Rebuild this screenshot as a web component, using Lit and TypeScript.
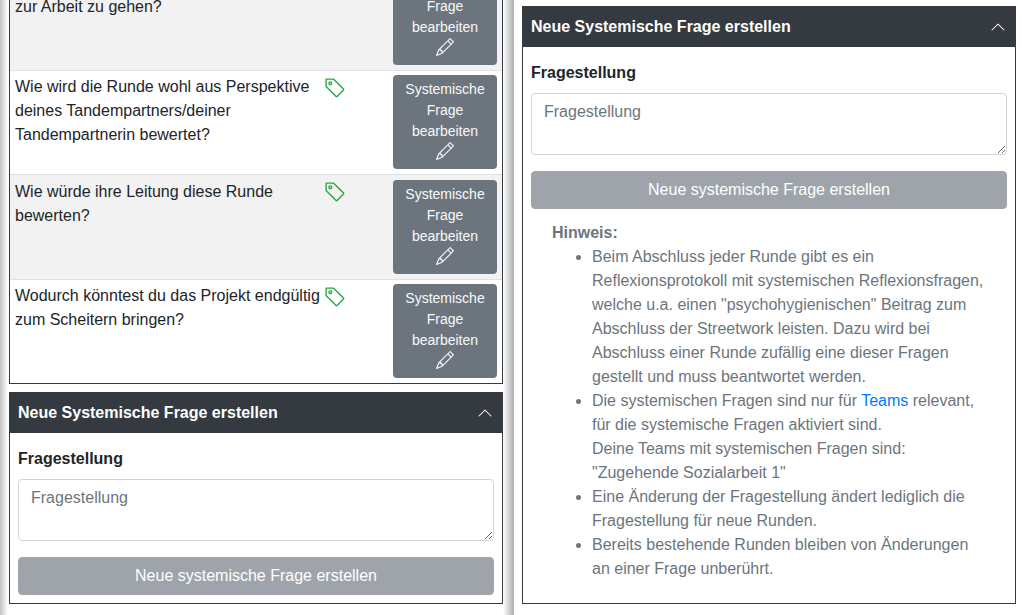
import { LitElement, html, css, svg } from 'lit';
import { customElement } from 'lit/decorators.js';

const chevronUp = svg`<path fill-rule="evenodd" d="M1.646 11.354a.5.5 0 0 1 0-.708l6-6a.5.5 0 0 1 .708 0l6 6a.5.5 0 0 1-.708.708L8 5.707l-5.646 5.647a.5.5 0 0 1-.708 0z"/>`;
const tag = svg`<path d="M6 4.5a1.5 1.5 0 1 1-3 0 1.5 1.5 0 0 1 3 0zm-1 0a.5.5 0 1 0-1 0 .5.5 0 0 0 1 0z"/><path d="M2 1h4.586a1 1 0 0 1 .707.293l7 7a1 1 0 0 1 0 1.414l-4.586 4.586a1 1 0 0 1-1.414 0l-7-7A1 1 0 0 1 1 6.586V2a1 1 0 0 1 1-1zm0 5.586l7 7L13.586 9l-7-7H2v4.586z"/>`;
const pencil = svg`<path d="M12.146.146a.5.5 0 0 1 .708 0l3 3a.5.5 0 0 1 0 .708l-10 10a.5.5 0 0 1-.168.11l-5 2a.5.5 0 0 1-.65-.65l2-5a.5.5 0 0 1 .11-.168l10-10zM11.207 2.5L13.5 4.793 14.793 3.5 12.5 1.207 11.207 2.5zm1.586 3L10.5 3.207 4 9.707V10h.5a.5.5 0 0 1 .5.5v.5h.5a.5.5 0 0 1 .5.5v.5h.293l6.5-6.5zm-9.761 5.175l-.106.106-1.528 3.821 3.821-1.528.106-.106A.5.5 0 0 1 5 12.5V12h-.5a.5.5 0 0 1-.5-.5V11h-.5a.5.5 0 0 1-.468-.325z"/>`;

@customElement('new-question-card')
export class NewQuestionCard extends LitElement {
  static styles = css`
    :host {
      display: block;
      border: 1px solid #343a40;
      border-top: 0;
      box-sizing: border-box;
      color: #212529;
    }
    .head {
      display: flex;
      justify-content: space-between;
      align-items: center;
      height: 41px;
      margin: 0 -1px;
      padding: 0 9px;
      background: #343a40;
      color: #fff;
      font-weight: 700;
    }
    .head svg {
      width: 16px;
      height: 16px;
      fill: #fff;
      margin-right: 1px;
    }
    .body {
      padding: 14px 8px 8px;
    }
    label {
      display: block;
      font-weight: 700;
      line-height: 24px;
      margin-bottom: 8px;
    }
    textarea {
      display: block;
      box-sizing: border-box;
      width: 100%;
      height: 62px;
      padding: 6px 12px;
      border: 1px solid #ced4da;
      border-radius: 4px;
      font: 16px/24px 'Liberation Sans', Arial, sans-serif;
      color: #495057;
      outline: none;
      margin-bottom: 16px;
    }
    textarea::placeholder {
      color: #6c757d;
      opacity: 1;
    }
    .submit {
      display: block;
      box-sizing: border-box;
      width: 100%;
      height: 38px;
      border: 1px solid #6c757d;
      border-radius: 4px;
      background: #6c757d;
      color: #fff;
      opacity: 0.65;
      font: 16px/24px 'Liberation Sans', Arial, sans-serif;
    }
  `;

  render() {
    return html`
      <div class="head">
        <span>Neue Systemische Frage erstellen</span>
        <svg viewBox="0 0 16 16">${chevronUp}</svg>
      </div>
      <div class="body">
        <label>Fragestellung</label>
        <textarea placeholder="Fragestellung"></textarea>
        <button class="submit" disabled>Neue systemische Frage erstellen</button>
        <slot></slot>
      </div>
    `;
  }
}

const questions = [
  html`<br />zur Arbeit zu gehen?`,
  html`Wie wird die Runde wohl aus Perspektive deines Tandempartners/deiner Tandempartnerin bewertet?`,
  html`Wie würde ihre Leitung diese Runde bewerten?`,
  html`Wodurch könntest du das Projekt endgültig zum Scheitern bringen?`,
];

@customElement('app-root')
export class AppRoot extends LitElement {
  static styles = css`
    :host {
      display: grid;
      grid-template-columns: 514px 1fr;
      height: 615px;
      overflow: hidden;
      background: #fff;
      font: 16px/24px 'Liberation Sans', Arial, sans-serif;
      color: #212529;
    }
    .left {
      box-sizing: border-box;
      height: 615px;
      overflow: hidden;
      padding: 0 11px 0 9px;
      background: linear-gradient(to right, #c4c4c4 0, #fff 8px, #fff 100%);
      position: relative;
    }
    .gutter {
      position: absolute;
      top: 0;
      right: 0;
      bottom: 0;
      width: 11px;
      background: linear-gradient(to right, #fff 0, #adadad 100%);
    }
    .table {
      margin-top: -35px;
      border: 1px solid #343a40;
      border-top: 0;
      margin-bottom: 8px;
    }
    .row {
      display: flex;
      align-items: flex-start;
      box-sizing: border-box;
      height: 104.5px;
      padding: 4.8px 5px 0;
      border-top: 1px solid #dee2e6;
      background: #fff;
    }
    .row:nth-child(odd) {
      background: #f2f2f2;
    }
    .question {
      width: 309px;
      flex: none;
    }
    .tag {
      flex: none;
      width: 22.4px;
      height: 22.4px;
      margin-top: 1.5px;
      fill: #28a745;
    }
    .edit {
      box-sizing: border-box;
      width: 104px;
      height: 94px;
      margin-left: auto;
      margin-right: 0;
      padding: 4px 8px;
      border-radius: 4px;
      background: #6c757d;
      color: #f8f9fa;
      font-size: 14px;
      line-height: 21px;
      text-align: center;
    }
    .edit svg {
      display: block;
      width: 18px;
      height: 18px;
      margin: 0 auto;
      fill: #f8f9fa;
    }
    .right {
      padding: 6px 6px 0 8px;
    }
    .right new-question-card {
      height: 598px;
    }
    .right .first {
      margin-top: 0;
    }
    .hint {
      margin: 12px 21px 0;
      color: #6c757d;
    }
    .hint b {
      display: block;
    }
    .hint ul {
      margin: 0;
      padding-left: 40px;
    }
    .hint a {
      color: #007bff;
      text-decoration: none;
    }
  `;

  render() {
    return html`
      <div class="left">
        <div class="table">
          ${questions.map(
            q => html`
              <div class="row">
                <div class="question">${q}</div>
                <svg class="tag" viewBox="0 0 16 16">${tag}</svg>
                <div class="edit">
                  Systemische Frage bearbeiten
                  <svg viewBox="0 0 16 16">${pencil}</svg>
                </div>
              </div>
            `
          )}
        </div>
        <new-question-card></new-question-card>
        <div class="gutter"></div>
      </div>
      <div class="right">
        <new-question-card>
          <div class="hint">
            <b>Hinweis:</b>
            <ul>
              <li>
                Beim Abschluss jeder Runde gibt es ein Reflexionsprotokoll mit systemischen
                Reflexionsfragen, welche u.a. einen "psychohygienischen" Beitrag zum Abschluss der
                Streetwork leisten. Dazu wird bei Abschluss einer Runde zufällig eine dieser Fragen
                gestellt und muss beantwortet werden.
              </li>
              <li>
                Die systemischen Fragen sind nur für <a href="#">Teams</a> relevant, für die
                systemische Fragen aktiviert sind.<br />
                Deine Teams mit systemischen Fragen sind:<br />
                "Zugehende Sozialarbeit 1"
              </li>
              <li>
                Eine Änderung der Fragestellung ändert lediglich die Fragestellung für neue Runden.
              </li>
              <li>Bereits bestehende Runden bleiben von Änderungen an einer Frage unberührt.</li>
            </ul>
          </div>
        </new-question-card>
      </div>
    `;
  }
}
